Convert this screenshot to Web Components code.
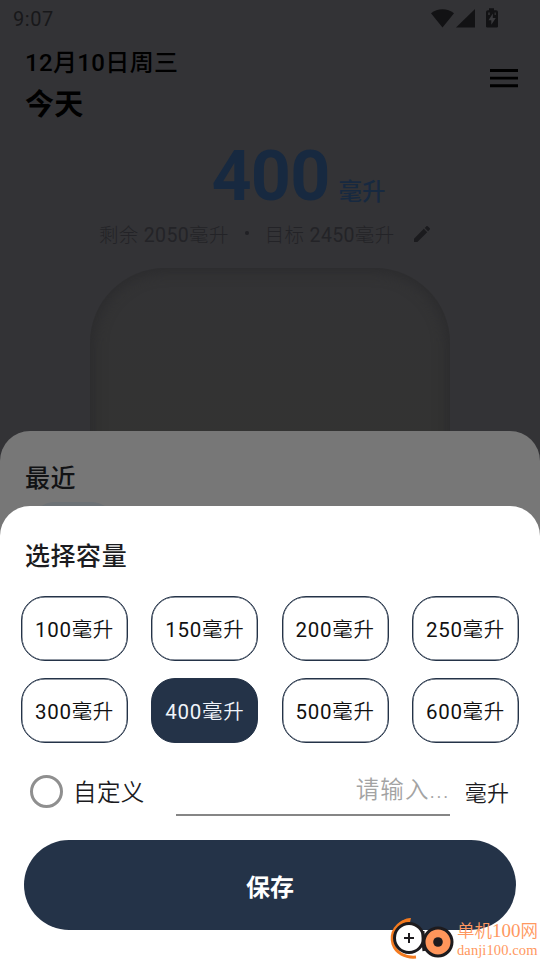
<!DOCTYPE html>
<html lang="zh-CN">
<head>
<meta charset="utf-8">
<title>选择容量</title>
<style>
html,body{margin:0;height:100%}
body{width:540px;height:960px;overflow:hidden;font-family:Roboto,"Noto Sans CJK SC",sans-serif}
</style>
</head>
<body>
<water-app></water-app>
<script>
const define = (name, html) => {
  const t = document.createElement('template');
  t.innerHTML = html;
  customElements.define(name, class extends HTMLElement {
    constructor() {
      super();
      this.attachShadow({mode: 'open'}).append(t.content.cloneNode(true));
    }
  });
};

define('status-bar', `
<style>
:host{display:flex;align-items:center;justify-content:space-between;height:36px;padding:1px 41px 0 13px;box-sizing:border-box;color:#18181a;font-size:20px;letter-spacing:.6px}
svg{display:block}
</style>
<span>9:07</span>
<svg width="68" height="22" viewBox="0 0 68 22" fill="#121214">
  <path d="M0 5.200C6.500-.2 16.500-.2 23 5.200L11.500 19.500Z"/>
  <path d="M25 19.500H44V1Z"/>
  <path d="M55 2.200H58V.2H63V2.200H65Q67 2.200 67 4V18.500Q67 19.500 65.500 19.500H56.500Q55 19.500 55 18.500V4Q55 2.200 57 2.200Z"/>
  <path d="M61.800 5.500L57.500 12.300H60.300V16.800L64.800 10H61.800Z" fill="#39393c"/>
  <path d="M57 4.600H59V7H57ZM63.500 4.600H65V7H63.500Z" fill="#2c2c2e"/>
</svg>`);

define('page-header', `
<style>
:host{display:flex;justify-content:space-between;height:98px;padding:9px 22px 0 25px;box-sizing:border-box;color:#000}
.d{font-size:24px;line-height:36px;font-weight:500;letter-spacing:.35px}
.t{font-size:29px;line-height:48px;font-weight:600;letter-spacing:.3px}
svg{margin-top:24px}
</style>
<div><div class="d">12月10日周三</div><div class="t">今天</div></div>
<svg width="28" height="19" viewBox="0 0 28 19"><path d="M0 0H28V3H0ZM0 7.700H28V10.500H0ZM0 15.200H28V18.200H0Z"/></svg>`);

define('intake-summary', `
<style>
:host{display:block;color:#232327}
.big{display:flex;align-items:baseline;justify-content:center;gap:9px;height:79px;line-height:85px;padding-left:57px;color:#172940}
.big b{font-size:70px;font-weight:700;letter-spacing:-.8px}
.big span{font-size:23.500px;font-weight:500}
.row{display:flex;align-items:center;height:40px;padding-left:99px;font-size:19.500px;letter-spacing:.35px;white-space:nowrap;font-weight:300}
.n{font-weight:400}
i{width:4px;height:4px;border-radius:50%;background:#202024;margin:0 16px}
svg{margin-left:19px;margin-top:2px}
</style>
<div class="big"><b>400</b><span>毫升</span></div>
<div class="row"><span>剩余 <span class="n">2050</span>毫升</span><i></i><span>目标 <span class="n">2450</span>毫升</span>
<svg width="16" height="16" viewBox="3 3 18 18" fill="#1b1b1e"><path d="M3 17.250V21h3.750L17.810 9.940l-3.750-3.750L3 17.250zM20.710 7.040a1 1 0 0 0 0-1.410l-2.340-2.340a1 1 0 0 0-1.410 0l-1.830 1.830 3.750 3.750 1.830-1.830z"/></svg></div>`);

define('water-cup', `
<style>
:host{display:block;width:360px;height:400px;margin:15px auto 0;border-radius:75px;background:linear-gradient(#333335,#333332 45%);box-shadow:inset 0 0 14px 3px #2b2b2d}
</style>`);

define('bottom-sheet', `
<style>
:host{display:block;position:absolute;left:0;right:0;bottom:0;box-sizing:border-box;border-radius:30px 30px 0 0;overflow:hidden}
h2{margin:0;font-size:25px;line-height:38px;font-weight:500;letter-spacing:.55px;padding-left:25px}
</style>
<h2><slot name="title"></slot></h2><slot></slot>`);

define('volume-chip', `
<style>
:host{display:flex;align-items:center;justify-content:center;box-sizing:border-box;width:107px;height:65px;border:1.500px solid #243348;border-radius:24px;font-size:20.500px;letter-spacing:.7px;color:#111;padding-bottom:1px;box-shadow:inset 0 0 0 .4px #243348}
:host([selected]){background:#243348;color:#f0f4fa}
.u{font-weight:350}
</style>
<span><slot></slot><span class="u">毫升</span></span>`);

define('volume-grid', `
<style>
:host{display:grid;grid-template-columns:repeat(4,107px);justify-content:space-between;row-gap:17.500px;padding:19.500px 21px 0}
</style>
<slot></slot>`);

define('custom-row', `
<style>
:host{display:flex;align-items:center;height:60px;margin-top:18px;padding-left:30px;font-size:23.500px;font-weight:350;color:#1b1b1e;letter-spacing:.4px}
i{width:33px;height:33px;box-sizing:border-box;border:3px solid #8f8f8f;border-radius:50%;margin-right:10px}
.in{width:274px;height:49px;box-sizing:border-box;border-bottom:2px solid #868686;margin:0 15px 0 31px;text-align:right;line-height:47px;color:#a3a3a3;letter-spacing:1.100px}
.u{font-size:22px}
</style>
<i></i><span>自定义</span><div class="in">请输入...</div><span class="u">毫升</span>`);

define('save-button', `
<style>
:host{display:flex;align-items:center;justify-content:center;height:90px;margin:19px 24px 0;border-radius:45px;background:#243348;color:#fff;font-size:24px;font-weight:600}
</style>
<slot></slot>`);

define('site-mark', `
<style>
:host{position:absolute;right:1px;bottom:0;display:flex;gap:2px;height:44px;color:#ff9860}
div{width:82px;font-family:"Liberation Serif","Noto Sans CJK SC",serif}
.a{font-size:17.500px;line-height:22px;margin-top:4px;white-space:nowrap;font-weight:350}
.a span{font-size:19px}
.b{font-size:14.500px;line-height:17px;white-space:nowrap;letter-spacing:.1px}
p{margin:0}
</style>
<svg width="66" height="44" viewBox="0 0 66 44" fill="none">
  <path d="M21 4C7 6 1 17 4 28C7 37 16 42 27 41" stroke="#f47b20" stroke-width="3"/>
  <path d="M7 11Q13 2 22 2L21 6Z" fill="#f47b20"/>
  <circle cx="20" cy="22" r="14.500" fill="#fff" stroke="#1d1b1e" stroke-width="3"/>
  <path d="M20 17V27M15 22H25" stroke="#1d1b1e" stroke-width="2"/>
  <circle cx="49" cy="26" r="14" fill="#ff965b" stroke="#1d1b1e" stroke-width="3"/>
  <circle cx="49" cy="26" r="4.800" fill="#1d1b1e"/>
  <path d="M34 15Q34 28 35 35" stroke="#1d1b1e" stroke-width="3"/>
</svg>
<div><p class="a">单机<span>100</span>网</p><p class="b">danji100.com</p></div>`);

define('water-app', `
<style>
:host{display:block;position:relative;width:540px;height:960px;overflow:hidden;background:#333336}
.recent{height:529px;padding-top:29px;background:#777;color:#111214}
.recent i{display:block;width:78px;height:60px;margin:4px 0 0 34px;border-radius:20px;background:#6d7276}
.pick{height:454px;padding-top:32px;background:#fff;color:#1b1c20}
</style>
<status-bar></status-bar>
<page-header></page-header>
<intake-summary></intake-summary>
<water-cup></water-cup>
<bottom-sheet class="recent"><span slot="title">最近</span><i></i></bottom-sheet>
<bottom-sheet class="pick"><span slot="title">选择容量</span>
  <volume-grid>
    <volume-chip>100</volume-chip><volume-chip>150</volume-chip><volume-chip>200</volume-chip><volume-chip>250</volume-chip>
    <volume-chip>300</volume-chip><volume-chip selected>400</volume-chip><volume-chip>500</volume-chip><volume-chip>600</volume-chip>
  </volume-grid>
  <custom-row></custom-row>
  <save-button>保存</save-button>
</bottom-sheet>
<site-mark></site-mark>`);
</script>
</body>
</html>
